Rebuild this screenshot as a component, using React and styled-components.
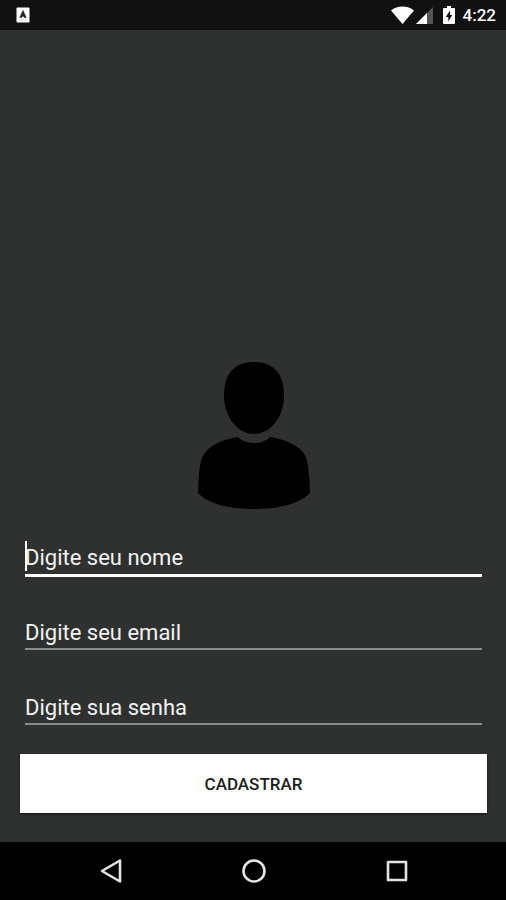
import React from 'react'
import styled, { createGlobalStyle } from 'styled-components';

const GlobalStyle = createGlobalStyle`
    body {
        margin: 0;
        background-color: #2f3130;
        font-family: Roboto, sans-serif;
    }

    * {
        box-sizing: border-box;
    }
`

const Screen = styled.div`
    min-height: 100vh;
    display: flex;
    flex-direction: column;
    background-color: #2f3130;
`

const StatusBar = styled.header`
    height: 30px;
    padding: 0 10px 0 16px;
    display: flex;
    align-items: center;
    justify-content: space-between;
    background-color: #111111;
    color: #fff;
`

const StatusIcons = styled.div`
    display: flex;
    align-items: center;

    svg {
        display: block;
    }
`

const Clock = styled.time`
    margin-left: 8px;
    font-size: 17px;
    line-height: 20px;
    font-weight: 500;
`

const Main = styled.main`
    flex: 1;
    display: flex;
    flex-direction: column;
    justify-content: flex-end;
    align-items: center;
    padding: 0 19px 29px 20px;
`

const Avatar = styled.svg`
    display: block;
    margin-bottom: 22px;
`

const Form = styled.form`
    width: 100%;
    display: flex;
    flex-direction: column;
    gap: 30px;
`

const Field = styled.label`
    position: relative;
    display: block;
    height: 45px;
    margin: 0 5px;
`

const Input = styled.input`
    display: block;
    width: 100%;
    height: ${props => props.$active ? '45px' : '43px'};
    padding: ${props => props.$active ? '12px 0 4px' : '12px 0 3px'};
    border: 0;
    border-bottom: ${props => props.$active ? '3px solid #fff' : '2px solid #8b8d8c'};
    border-radius: 0;
    outline: 0;
    background: transparent;
    color: #f3f3f3;
    font-family: inherit;
    font-size: 22px;
    line-height: 26px;

    &::placeholder {
        color: #f3f3f3;
        opacity: 1;
    }
`

const Caret = styled.span`
    position: absolute;
    left: 0;
    top: 9px;
    width: 2px;
    height: 30px;
    background-color: #fff;
`

const Button = styled.button`
    height: 59px;
    margin-top: -3px;
    border: 0;
    background-color: #fff;
    color: #1c1c1c;
    font-family: inherit;
    font-size: 17px;
    font-weight: 500;
    box-shadow: 0 1px 2px #111;
`

const NavBar = styled.nav`
    height: 58px;
    padding: 0 38px 0 40px;
    display: flex;
    align-items: center;
    background-color: #000;
`

const NavButton = styled.button`
    flex: 1;
    display: flex;
    justify-content: center;
    padding: 0;
    border: 0;
    background: transparent;

    svg {
        display: block;
        fill: none;
        stroke: #e4e4e4;
        stroke-width: 2.6;
        stroke-linejoin: round;
    }
`

const fields = [
    { name: 'nome', type: 'text', label: 'Digite seu nome', active: true },
    { name: 'email', type: 'email', label: 'Digite seu email' },
    { name: 'senha', type: 'password', label: 'Digite sua senha' },
]

const App = () => {
    return (
        <Screen>
            <GlobalStyle />
            <StatusBar>
                <svg width="14" height="16" viewBox="0 0 14 16">
                    <rect x="0.5" y="0.5" width="13" height="15" rx="1" fill="#fff" />
                    <path d="M7 3.5 L10.2 10.5 H8.3 L7 8.8 L5.6 10.5 H3.8 Z" fill="#222" stroke="#222" strokeWidth="0.6" />
                    <path d="M3.5 12.8 H10.5" stroke="#ccc" strokeWidth="0.8" />
                </svg>
                <StatusIcons>
                    <svg width="52" height="20" viewBox="0 0 52 20">
                        <path d="M0 5.5 C6 0.3 17 0.3 23 5.5 L11.5 19 Z" fill="#fff" />
                        <path d="M42 2 V19 H25 Z" fill="#555" />
                        <path d="M36 8 V19 H25 Z" fill="#fff" />
                    </svg>
                    <svg width="12" height="20" viewBox="0 0 12 20">
                        <path d="M1 3 H4 V1 H8 V3 H11 Q12 3 12 4 V18 Q12 19 11 19 H1 Q0 19 0 18 V4 Q0 3 1 3 Z" fill="#fff" />
                        <path d="M7 5.5 L2.8 12 H5.3 V16.5 L9.3 10 H7 Z" fill="#111" />
                    </svg>
                    <Clock>4:22</Clock>
                </StatusIcons>
            </StatusBar>
            <Main>
                <Avatar width="114" height="149" viewBox="0 0 114 149">
                    <path d="M57 1 C77 1 87 13 87 35 C87 56 73 73 57 73 C41 73 27 56 27 35 C27 13 37 1 57 1 Z" />
                    <path d="M41 76 C49 84 65 84 73 76 C91 79 107 86 110 100 C112 109 113 121 113 132 C101 144 80 148 57 148 C34 148 13 144 1 132 C1 121 2 109 4 100 C8 86 23 79 41 76 Z" />
                </Avatar>
                <Form>
                    {fields.map(field => (
                        <Field key={field.name}>
                            <Input
                                type={field.type}
                                name={field.name}
                                placeholder={field.label}
                                aria-label={field.label}
                                $active={field.active}
                            />
                            {field.active && <Caret />}
                        </Field>
                    ))}
                    <Button type="button">CADASTRAR</Button>
                </Form>
            </Main>
            <NavBar>
                <NavButton aria-label="Voltar">
                    <svg width="24" height="26" viewBox="0 0 24 26"><path d="M21 2.5 V23.5 L3 13 Z" /></svg>
                </NavButton>
                <NavButton aria-label="Início">
                    <svg width="26" height="26" viewBox="0 0 26 26"><circle cx="13" cy="13" r="10.5" /></svg>
                </NavButton>
                <NavButton aria-label="Recentes">
                    <svg width="24" height="24" viewBox="0 0 24 24"><rect x="3" y="3" width="18" height="18" /></svg>
                </NavButton>
            </NavBar>
        </Screen>
    );
}

export default App
